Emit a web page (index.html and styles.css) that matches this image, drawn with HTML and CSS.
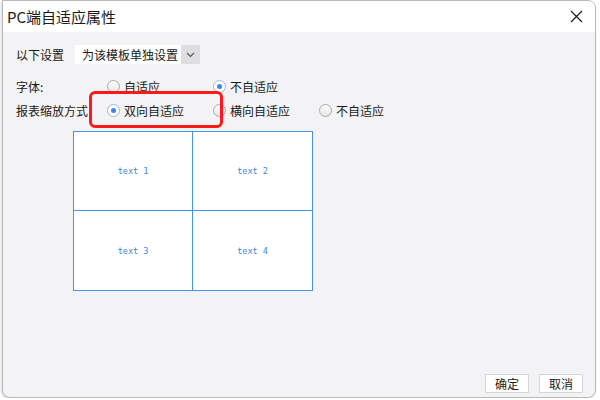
FILE: index.html
```html
<!DOCTYPE html>
<html lang="zh-CN">
<head>
<meta charset="UTF-8">
<title>PC端自适应属性</title>
<link rel="stylesheet" href="styles.css">
</head>
<body>
<div class="window">
    <div class="titlebar">
        <span class="title">PC端自适应属性</span>
        <svg class="close" width="13" height="13" viewBox="0 0 13 13">
            <path d="M1 1 L12 12 M12 1 L1 12" stroke="#1a1a1a" stroke-width="1.2" fill="none"/>
        </svg>
    </div>
    <div class="content">
        <div class="row first">
            <label class="label short">以下设置</label>
            <div class="select">
                <span class="select-text">为该模板单独设置</span>
                <span class="select-btn">
                    <svg width="9" height="6" viewBox="0 0 9 6"><path d="M1 1 L4.5 4.5 L8 1" stroke="#555" stroke-width="1.1" fill="none"/></svg>
                </span>
            </div>
        </div>
        <div class="row">
            <label class="label">字体:</label>
            <span class="option"><span class="radio"></span>自适应</span>
            <span class="option"><span class="radio checked"></span>不自适应</span>
        </div>
        <div class="row">
            <label class="label">报表缩放方式</label>
            <span class="option"><span class="radio checked"></span>双向自适应</span>
            <span class="option"><span class="radio"></span>横向自适应</span>
            <span class="option"><span class="radio"></span>不自适应</span>
        </div>
        <div class="preview">
            <div class="cell">text 1</div>
            <div class="cell">text 2</div>
            <div class="cell">text 3</div>
            <div class="cell">text 4</div>
        </div>
        <div class="highlight"></div>
    </div>
    <div class="footer">
        <button class="btn">确定</button>
        <button class="btn">取消</button>
    </div>
</div>
</body>
</html>
```
FILE: styles.css
```css
body {
    margin: 0;
    background-color: #fff;
    font-family: "Noto Sans CJK SC", "Noto Sans", sans-serif;
    color: #1a1a1a;
}
.window {
    box-sizing: border-box;
    margin-left: 2px;
    width: 594px;
    height: 398px;
    border: 1px solid #b9b9b9;
    border-radius: 0 8px 8px 8px;
    background-color: #f3f3f5;
    display: flex;
    flex-direction: column;
    overflow: hidden;
    box-shadow: -1px 1px 3px rgba(0, 0, 0, 0.15);
}
.titlebar {
    height: 31px;
    background-color: #fff;
    display: flex;
    align-items: center;
    justify-content: space-between;
    padding: 0 12px 0 4px;
    flex-shrink: 0;
}
.title {
    font-size: 15px;
    line-height: 20px;
}
.close {
    display: block;
}
.content {
    position: relative;
    padding: 13px 0 0 13px;
    font-size: 12px;
}
.row {
    display: flex;
    align-items: center;
    height: 24px;
}
.row.first {
    height: 19px;
    margin-bottom: 10px;
}
.label {
    width: 91px;
    flex-shrink: 0;
}
.label.short {
    width: 59px;
}
.select {
    display: flex;
    height: 19px;
    background-color: #fff;
}
.select-text {
    width: 99px;
    padding-left: 7px;
    line-height: 19px;
}
.select-btn {
    width: 19px;
    background-color: #dedee0;
    display: flex;
    align-items: center;
    justify-content: center;
}
.option {
    display: flex;
    align-items: center;
    width: 106px;
    flex-shrink: 0;
}
.radio {
    box-sizing: border-box;
    width: 13px;
    height: 13px;
    border-radius: 50%;
    border: 1px solid #a8a8a8;
    background: linear-gradient(#fdfdfd, #e6e6e6);
    margin-right: 4px;
    display: flex;
    align-items: center;
    justify-content: center;
}
.radio.checked {
    border-color: #9bb6d8;
    background: #fff;
}
.radio.checked::after {
    content: "";
    width: 5px;
    height: 5px;
    border-radius: 50%;
    background-color: #3d86ee;
}
.preview {
    display: grid;
    grid-template-columns: 118px 119px;
    grid-template-rows: 78px 79px;
    gap: 1px;
    width: 240px;
    height: 160px;
    box-sizing: border-box;
    margin: 9px 0 0 57px;
    border: 1px solid #4a90ec;
    background-color: #4a90ec;
}
.cell {
    background-color: #fff;
    display: flex;
    align-items: center;
    justify-content: center;
    font-family: "DejaVu Sans Mono", monospace;
    font-size: 8.5px;
    color: #3f86e4;
}
.highlight {
    position: absolute;
    left: 86px;
    top: 59px;
    width: 134px;
    height: 37px;
    box-sizing: border-box;
    border: 3px solid #ff1a1a;
    border-radius: 6px;
}
.footer {
    margin-top: auto;
    display: flex;
    justify-content: flex-end;
    gap: 10px;
    padding: 0 12px 4px 0;
}
.btn {
    width: 44px;
    height: 19px;
    padding: 0;
    border: 1px solid #d6d6d6;
    background-color: #fff;
    font-family: "Noto Sans CJK SC", sans-serif;
    font-size: 12px;
    line-height: 17px;
    color: #1a1a1a;
}
```
